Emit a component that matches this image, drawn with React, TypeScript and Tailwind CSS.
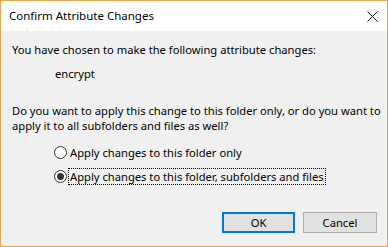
import React from "react";

const font = { fontFamily: '"Noto Sans", "Segoe UI", sans-serif' };

function Radio({ checked }: { checked?: boolean }) {
  return (
    <span className="w-[13px] h-[13px] rounded-full border border-[#333333] bg-white flex items-center justify-center shrink-0">
      {checked && <span className="w-[7px] h-[7px] rounded-full bg-[#333333]" />}
    </span>
  );
}

export default function App() {
  return (
    <div
      className="w-[388px] h-[247px] border border-[#e6a551] bg-[#f0f0f0] flex flex-col text-[11.2px] text-black whitespace-nowrap"
      style={font}
    >
      <div className="h-[30px] bg-white flex items-center justify-between pl-[8px] pr-[9px] text-[11.5px]">
        <span className="leading-none">Confirm Attribute Changes</span>
        <svg width="11" height="11" viewBox="0 0 11 11">
          <path d="M0.5 0.5 L10.5 10.5 M10.5 0.5 L0.5 10.5" stroke="#111" strokeWidth="1" />
        </svg>
      </div>

      <div className="flex flex-col px-[11px] pt-[11px] leading-[15px]">
        <p>You have chosen to make the following attribute changes:</p>
        <p className="pl-[43px] mt-[9px]">encrypt</p>
        <p className="mt-[22px]">
          Do you want to apply this change to this folder only, or do you want to
          <br />
          apply it to all subfolders and files as well?
        </p>

        <div className="flex flex-col pl-[42px] mt-[11px] gap-[7px]">
          <label className="flex items-center gap-[1px]">
            <Radio />
            <span className="px-[1px] border border-transparent">Apply changes to this folder only</span>
          </label>
          <label className="flex items-center gap-[1px]">
            <Radio checked />
            <span className="px-[1px] border border-dotted border-black">
              Apply changes to this folder, subfolders and files
            </span>
          </label>
        </div>
      </div>

      <div className="mt-auto mb-[13px] flex justify-end gap-[8px] pr-[10px]">
        <button className="w-[73px] h-[21px] bg-[#e1e1e1] border-2 border-[#0078d7] text-[11.2px] leading-none">
          OK
        </button>
        <button className="w-[74px] h-[21px] bg-[#e1e1e1] border border-[#adadad] text-[11.2px] leading-none">
          Cancel
        </button>
      </div>
    </div>
  );
}
